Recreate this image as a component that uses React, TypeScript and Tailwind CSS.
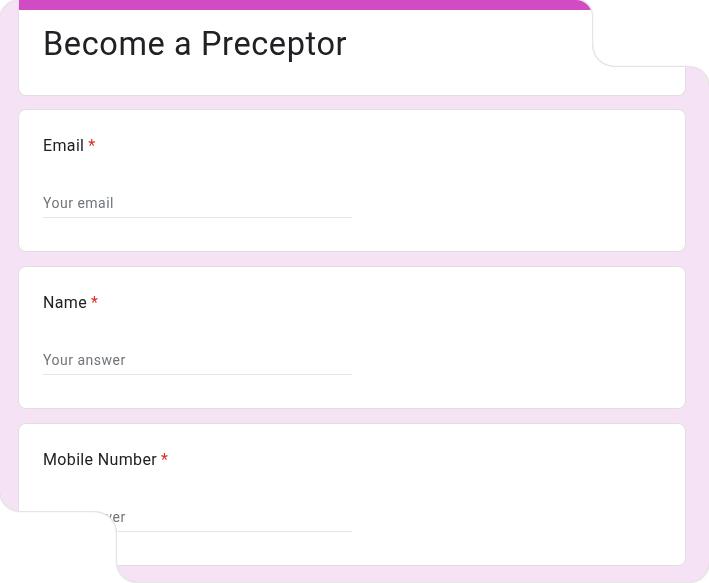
import React from "react";

interface QuestionProps {
  label: string;
  placeholder: string;
  type?: string;
}

const Question = ({ label, placeholder, type = "text" }: QuestionProps) => {
  return (
    <div className="bg-white rounded-lg border border-[#e2dde2] pt-6 px-6 pb-[33px]">
      <div className="text-base leading-6 tracking-[0.35px] text-[#202124]">
        {label}
        <span className="text-[#d93025] ml-1">*</span>
      </div>
      <div className="mt-[35px] w-[309px] pb-1 border-b border-[#e6e6e6]">
        <input
          type={type}
          placeholder={placeholder}
          className="block w-full h-5 bg-transparent text-sm leading-5 tracking-[0.5px] text-[#202124] placeholder:text-[#70757a] outline-none"
        />
      </div>
    </div>
  );
};

export default function App() {
  return (
    <div className="w-[709px] h-[583px] bg-white font-['Roboto',sans-serif]">
      {/* outline of the framed shape */}
      <div className="drop-shadow-[0_0_1px_rgba(0,0,0,0.3)]">
        <div className="w-[709px] h-[582px] bg-[#f6e2f5] pl-[18px] pr-[23px] flex flex-col [clip-path:path('M0_20_A20_20_0_0_1_20_0_L576_0_A16_16_0_0_1_592_16_L592_45_A22_22_0_0_0_614_67_L689_67_A20_20_0_0_1_709_87_L709_562_A20_20_0_0_1_689_582_L137_582_A20_20_0_0_1_117_562_L117_533_A22_22_0_0_0_95_511_L20_511_A20_20_0_0_1_0_491_Z')]">
          {/* Header card */}
          <div className="bg-white rounded-b-lg border border-t-0 border-[#e2dde2] overflow-hidden">
            <div className="h-[10px] bg-[#d14bc4]" />
            <h1 className="px-6 pt-[14px] pb-[31px] text-[32.5px] leading-10 tracking-[0.6px] font-normal text-[#202124]">
              Become a Preceptor
            </h1>
          </div>

          <div className="mt-[13px] flex flex-col gap-[14px]">
            <Question label="Email" placeholder="Your email" type="email" />
            <Question label="Name" placeholder="Your answer" />
            <Question label="Mobile Number" placeholder="Your answer" type="tel" />
          </div>
        </div>
      </div>
    </div>
  );
}
